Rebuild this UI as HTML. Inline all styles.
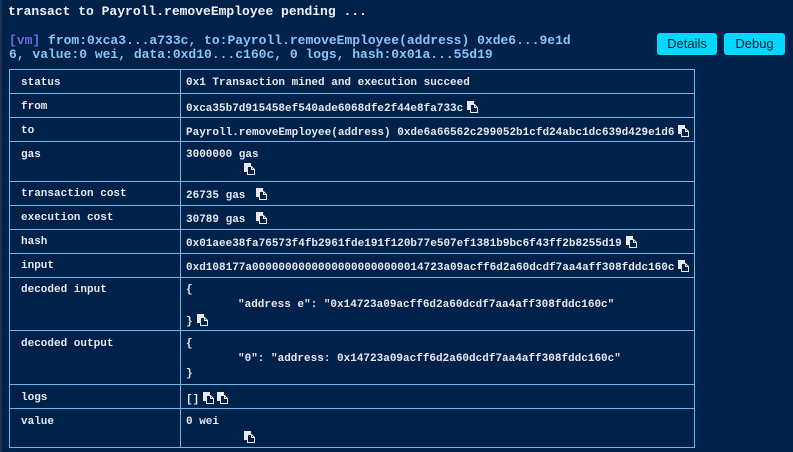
<!DOCTYPE html>
<html><head><style>
*{margin:0;padding:0;box-sizing:border-box}
body{width:793px;height:452px;background:#00214a;position:relative;overflow:hidden;font-family:"Liberation Mono",monospace;font-weight:bold;color:#e6e8ee}
.strip{position:absolute;left:0;top:0;width:2px;height:452px;background:#1c3050}
.h{position:absolute;left:8px;top:4px;font-size:13px;color:#f0f2f6}
.l{position:absolute;left:9px;font-size:13px;color:#8cc4f4;font-weight:bold;white-space:pre;line-height:14px}
.vm{color:#6a6ad8}
.btn{position:absolute;top:33px;height:22px;background:#00d8ff;border-radius:3px;font-family:"Liberation Sans",sans-serif;font-weight:normal;font-size:13px;color:#0a1a30;text-align:center;line-height:22px}
.tbl{position:absolute;left:9px;top:69px;width:686px;height:379px;border:1px solid #6ab8f0}
.r{position:absolute;left:0;width:684px;border-top:1px solid #6ab8f0}
.div{position:absolute;left:170px;top:0;width:1px;height:377px;background:#6ab8f0}
.t{position:absolute;font-size:11px;white-space:pre;line-height:13px}
.ic{display:inline-block;vertical-align:-2px;margin-left:4px}
</style></head><body>
<div class="strip"></div>
<div class="h">transact to Payroll.removeEmployee pending ...</div>
<div class="l" style="top:34px"><span class="vm">[vm]</span> from:0xca3...a733c, to:Payroll.removeEmployee(address) 0xde6...9e1d</div>
<div class="l" style="top:48px">6, value:0 wei, data:0xd10...c160c, 0 logs, hash:0x01a...55d19</div>
<div class="btn" style="left:657px;width:60px">Details</div>
<div class="btn" style="left:724px;width:61px">Debug</div>
<div class="tbl">
<div class="div"></div>
<div class="r" style="top:23px"></div>
<div class="r" style="top:47px"></div>
<div class="r" style="top:71px"></div>
<div class="r" style="top:111px"></div>
<div class="r" style="top:135px"></div>
<div class="r" style="top:159px"></div>
<div class="r" style="top:183px"></div>
<div class="r" style="top:207px"></div>
<div class="r" style="top:260px"></div>
<div class="r" style="top:314px"></div>
<div class="r" style="top:338px"></div>
</div>
<svg width="0" height="0" style="position:absolute"><defs><symbol id="cp" viewBox="0 0 11 12"><rect x="0" y="0" width="7" height="9" fill="#e8eaf0"/><path d="M3.5 3.5h4l3 3v5h-7z" fill="#00214a" stroke="#e8eaf0" stroke-width="1"/><path d="M7.5 3.5v3h3" fill="none" stroke="#e8eaf0"/></symbol></defs></svg>
<div class="t" style="left:21px;top:77px">status</div>
<div class="t" style="left:186px;top:77px">0x1 Transaction mined and execution succeed</div>
<div class="t" style="left:21px;top:101px">from</div>
<div class="t" style="left:186px;top:101px">0xca35b7d915458ef540ade6068dfe2f44e8fa733c<svg class="ic" width="11" height="12"><use href="#cp"/></svg></div>
<div class="t" style="left:21px;top:125px">to</div>
<div class="t" style="left:186px;top:125px">Payroll.removeEmployee(address) 0xde6a66562c299052b1cfd24abc1dc639d429e1d6<svg class="ic" width="11" height="12"><use href="#cp"/></svg></div>
<div class="t" style="left:21px;top:149px">gas</div>
<div class="t" style="left:186px;top:149px">3000000 gas</div>
<svg style="position:absolute;left:244px;top:163px" width="11" height="12"><use href="#cp"/></svg>
<div class="t" style="left:21px;top:188px">transaction cost</div>
<div class="t" style="left:186px;top:188px">26735 gas <svg class="ic" width="11" height="12"><use href="#cp"/></svg></div>
<div class="t" style="left:21px;top:212px">execution cost</div>
<div class="t" style="left:186px;top:212px">30789 gas <svg class="ic" width="11" height="12"><use href="#cp"/></svg></div>
<div class="t" style="left:21px;top:236px">hash</div>
<div class="t" style="left:186px;top:236px">0x01aee38fa76573f4fb2961fde191f120b77e507ef1381b9bc6f43ff2b8255d19<svg class="ic" width="11" height="12"><use href="#cp"/></svg></div>
<div class="t" style="left:21px;top:260px">input</div>
<div class="t" style="left:186px;top:260px">0xd108177a00000000000000000000000014723a09acff6d2a60dcdf7aa4aff308fddc160c<svg class="ic" width="11" height="12"><use href="#cp"/></svg></div>
<div class="t" style="left:21px;top:284px">decoded input</div>
<div class="t" style="left:186px;top:284px">{</div>
<div class="t" style="left:238px;top:299px">"address e": "0x14723a09acff6d2a60dcdf7aa4aff308fddc160c"</div>
<div class="t" style="left:186px;top:314px">}<svg class="ic" width="11" height="12"><use href="#cp"/></svg></div>
<div class="t" style="left:21px;top:338px">decoded output</div>
<div class="t" style="left:186px;top:338px">{</div>
<div class="t" style="left:238px;top:353px">"0": "address: 0x14723a09acff6d2a60dcdf7aa4aff308fddc160c"</div>
<div class="t" style="left:186px;top:368px">}</div>
<div class="t" style="left:21px;top:392px">logs</div>
<div class="t" style="left:186px;top:392px">[]<svg class="ic" width="11" height="12"><use href="#cp"/></svg><svg class="ic" width="11" height="12" style="margin-left:3px"><use href="#cp"/></svg></div>
<div class="t" style="left:21px;top:416px">value</div>
<div class="t" style="left:186px;top:416px">0 wei</div>
<svg style="position:absolute;left:244px;top:431px" width="11" height="12"><use href="#cp"/></svg>
</body></html>
